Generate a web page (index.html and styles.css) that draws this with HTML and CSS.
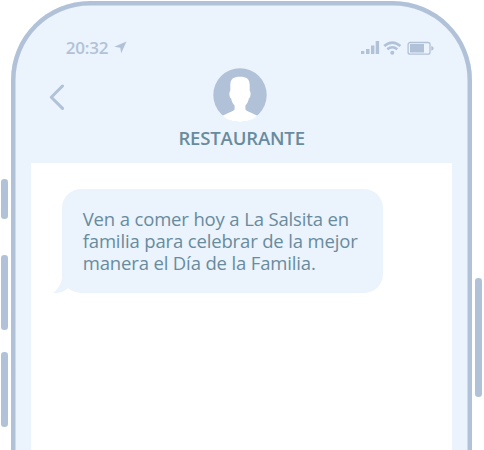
FILE: index.html
```html
<!DOCTYPE html>
<html lang="es">
<head>
<meta charset="utf-8">
<title>Restaurante</title>
<link rel="stylesheet" href="styles.css">
</head>
<body>
<div class="scene">
  <div class="keys keys-left"><i class="key key-mute"></i><i class="key key-volume"></i><i class="key key-volume"></i></div>
  <main class="phone">
    <header class="header">
      <div class="status">
        <span class="time">20:32</span>
        <svg class="location" width="13" height="13" viewBox="0 0 13 13"><path d="M12.5.5 7.2 12.3 6.3 6.7.2 5.8Z"/></svg>
        <svg class="indicators" width="74" height="16" viewBox="0 0 74 16">
          <path d="M1 11h3.300v3H1zM6 9h3.500v5H6zM11 5.500h3.400V14H11zM15.700 1h3.400v13h-3.400z"/>
          <g class="waves"><path d="M24.200 6.100Q32.300-.9 40.400 6.100"/><path d="M27.300 9.300Q32.300 5.200 37.300 9.300"/></g>
          <circle cx="32.300" cy="12.800" r="2"/>
          <rect class="battery" x="48.100" y="2.500" width="21.900" height="11.700" rx="2"/>
          <path d="M50 4h14v8.400H50zM71.300 5.800q2.400 1 2.400 2.500t-2.400 2.500z"/>
        </svg>
      </div>
      <div class="contact">
        <svg class="back" width="16" height="26" viewBox="0 0 16 26"><path d="M13.500 2 2.300 13.200 13.500 24.400"/></svg>
        <svg class="avatar" width="54" height="54" viewBox="0 0 54 54">
          <circle class="disc" cx="27" cy="27" r="26.700"/>
          <path class="person" d="M27 8.800C33.500 8.800 36.700 11 36.700 17v6c1.400.7 1.200 6.500-.8 7.500-.7 3.500-2 5.200-3.500 7v3.800c0 1.500 6.500 3.500 12 6.500C40 51.800 34 54 27 54S14 51.800 9.600 47.800c5.500-3 12-5 12-6.500v-3.800c-1.500-1.800-2.800-3.500-3.500-7-2-1-2.200-6.800-.8-7.500V17c0-6 3.200-8.200 9.700-8.200Z"/>
        </svg>
      </div>
      <h1 class="name">RESTAURANTE</h1>
    </header>
    <section class="chat">
      <div class="bubble">
        <span class="line line-one">Ven a comer hoy a La Salsita en</span>
        <span class="line line-two">familia para celebrar de la mejor</span>
        <span class="line line-three">manera el Día de la Familia.</span>
        <svg class="tail" width="30" height="24" viewBox="0 0 30 24"><path d="M10.200 0V6C10.200 14 6 20.500 1 23.900 8 24.500 12 22.500 15.500 19.500L30 12V0Z"/></svg>
      </div>
    </section>
  </main>
  <div class="keys keys-right"><i class="key key-power"></i></div>
</div>
</body>
</html>
```
FILE: styles.css
```css
* { box-sizing: border-box; }
body {
  margin: 0;
  background: #fff;
  font-family: "Open Sans", sans-serif;
  overflow: hidden;
}
svg { display: block; fill: #b1c2d8; }
.scene { display: flex; height: 450px; overflow: hidden; }
.keys { display: flex; flex-direction: column; flex: none; }
.keys-left { width: 11.2px; padding: 179px 0 0 1.300px; }
.keys-right { padding: 278.200px 0 0 3.200px; }
.key { display: block; width: 6.500px; border-radius: 3.200px; background: #b1c2d8; flex: none; }
.key-mute { height: 39.700px; margin-bottom: 36.500px; }
.key-volume { height: 75px; margin-bottom: 21.700px; }
.key-power { width: 6.800px; height: 118.700px; }
.phone {
  flex: none;
  width: 460.500px;
  height: 540px;
  margin-top: .8px;
  border-radius: 79px;
  box-shadow: inset 0 0 0 4.500px #b1c2d8;
  background: #ebf3fc;
  padding: 4px 19.600px 0 20px;
}
.header { height: 158.200px; padding-top: 34px; }
.status { display: flex; align-items: flex-start; height: 29px; padding-left: 34.500px; }
.time {
  width: 48px;
  font-size: 17px;
  line-height: 18px;
  font-weight: 600;
  letter-spacing: -.2px;
  color: #b1c2d8;
  white-space: nowrap;
}
.location { margin-top: 2px; }
.indicators { margin: 1px 18px 0 auto; }
.waves { fill: none; stroke: #b1c2d8; stroke-width: 2.600; }
.battery { fill: none; stroke: #b1c2d8; stroke-width: 1.300; }
.contact { display: flex; height: 54px; }
.back { margin: 16px 0 0 17.500px; fill: none; stroke: #b1c2d8; stroke-width: 3; stroke-linecap: round; stroke-linejoin: round; }
.avatar { margin-left: 148px; }
.disc { fill: #b1c2d8; }
.person { fill: #fff; }
.name {
  margin: 5px 0 0;
  text-align: center;
  font-size: 18.500px;
  line-height: 22px;
  font-weight: 550;
  letter-spacing: -.15px;
  color: #688b9e;
}
.chat { height: 382px; background: #fff; padding: 26px 0 0 30.500px; }
.bubble {
  position: relative;
  width: 321.500px;
  height: 104px;
  border-radius: 19px;
  background: #ebf3fc;
  padding: 19px 0 0 21px;
  font-size: 18.500px;
  line-height: 22px;
  letter-spacing: -.15px;
  color: #688b9e;
}
.line { display: block; width: max-content; }
.tail { position: absolute; left: -10px; bottom: 0; fill: #ebf3fc; }
```
